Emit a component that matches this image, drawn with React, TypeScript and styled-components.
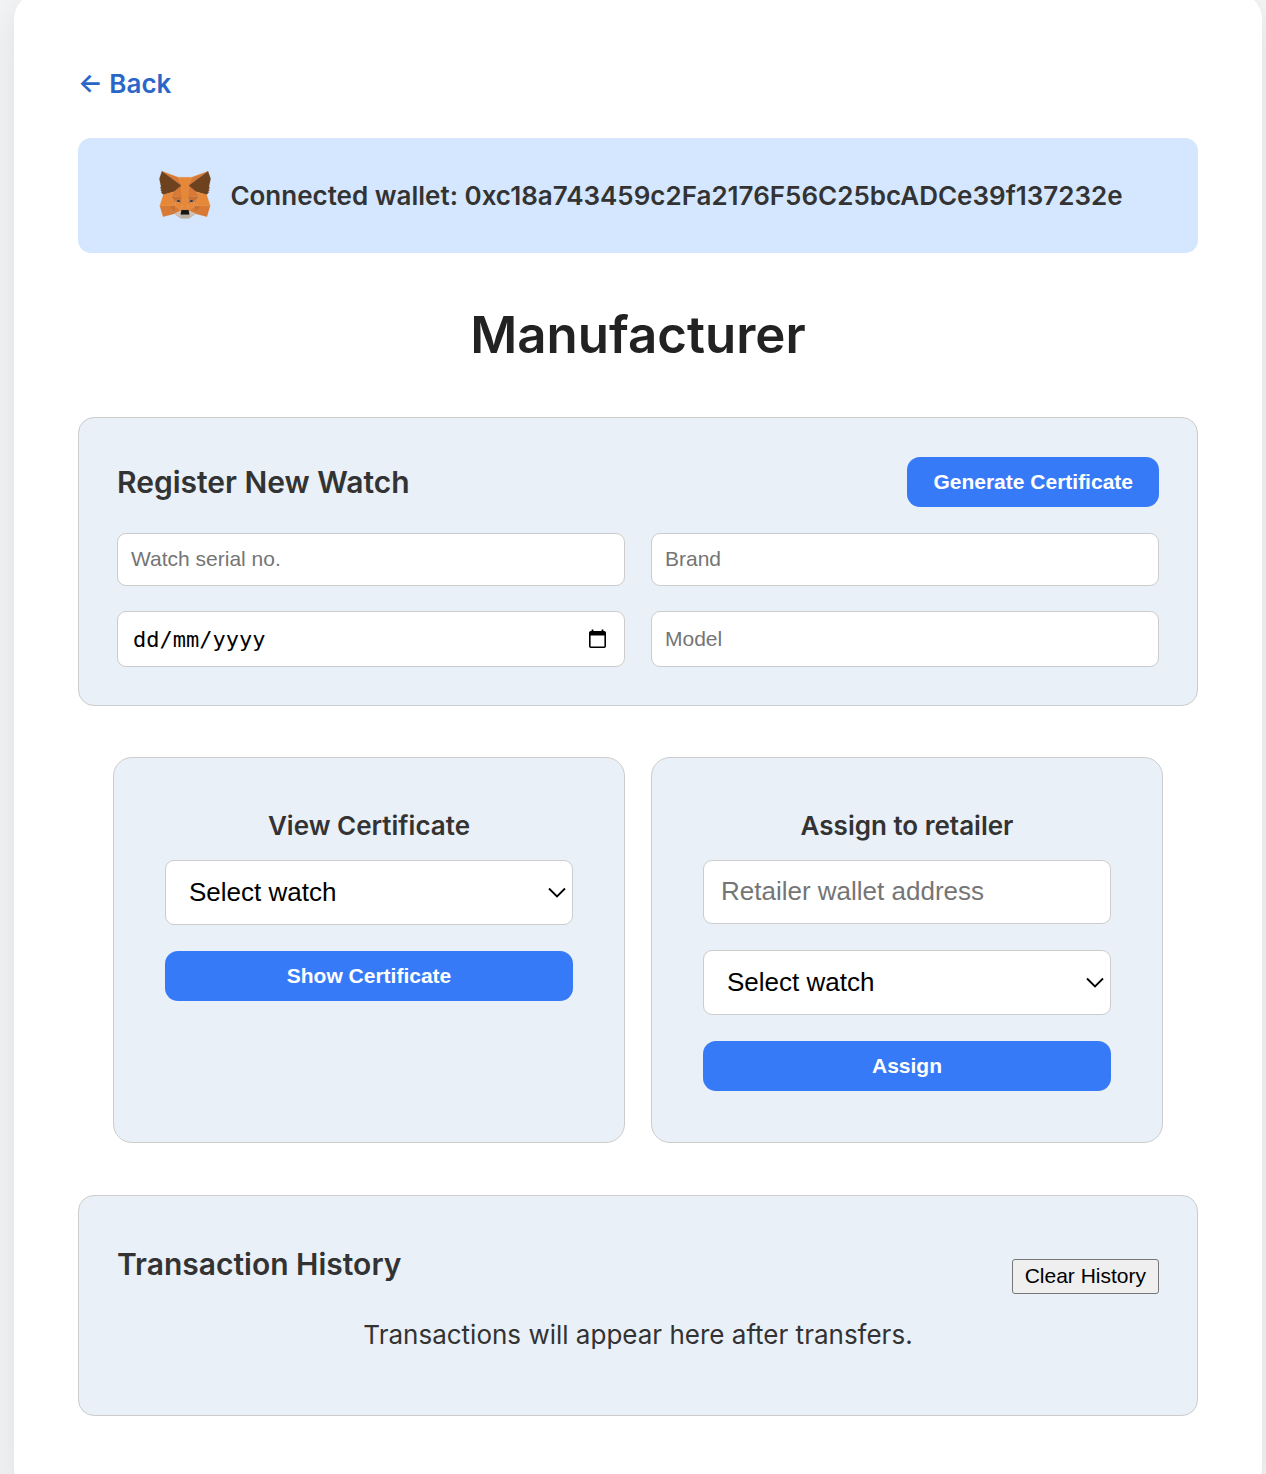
import React from "react";
import styled, { createGlobalStyle } from "styled-components";

const ui = `Inter, "Liberation Sans", sans-serif`;
const control = `"Liberation Sans", Arial, sans-serif`;

const GlobalStyle = createGlobalStyle`
  html { scrollbar-width: none; }
  *, *::before, *::after { box-sizing: border-box; }
  body {
    margin: 0;
    background: #f3f4f6;
    color: #333;
    font-family: ${ui};
    font-size: 26px;
    line-height: 32px;
    -webkit-font-smoothing: antialiased;
  }
`;

const Page = styled.div`
  min-height: 100vh;
  padding: 0 4px 26px 14px;
  overflow: hidden;
`;

const Sheet = styled.main`
  margin-top: -7px;
  padding: 75px 64px 78px;
  border-radius: 26px;
  background: #fff;
  box-shadow: 0 12px 40px rgba(0, 0, 0, 0.09);
`;

const BackLink = styled.a`
  display: block;
  width: fit-content;
  margin-bottom: 38px;
  color: #2a66c8;
  font-weight: 600;
  text-decoration: none;
`;

const Wallet = styled.div`
  display: flex;
  align-items: center;
  justify-content: center;
  gap: 13px;
  min-height: 115px;
  padding: 25px;
  border-radius: 13px;
  background: #d5e7fe;
  font-weight: 600;
`;

const Title = styled.h1`
  margin: 49px 0;
  color: #222;
  font-size: 51px;
  line-height: 66px;
  font-weight: 600;
  text-align: center;
`;

const Card = styled.section`
  padding: 39px 38px 38px;
  border: 1px solid #ccc;
  border-radius: 16px;
  background: #e9f0f7;
`;

const CardHead = styled.div`
  display: flex;
  justify-content: space-between;
  align-items: center;
  margin-bottom: 26px;
`;

const HistoryHead = styled(CardHead)`
  align-items: flex-end;
  margin: 10px 0 24px;
`;

const CardTitle = styled.h2`
  margin: 0;
  font-size: 30px;
  line-height: 38px;
  font-weight: 600;
`;

const HistoryTitle = styled(CardTitle)`
  align-self: flex-start;
  margin-bottom: 11px;
`;

const FieldGrid = styled.div`
  display: grid;
  grid-template-columns: 1fr 1fr;
  gap: 25px 26px;
`;

const Input = styled.input<{ $large?: boolean }>`
  width: 100%;
  min-height: ${(p) => (p.$large ? 64 : 53)}px;
  padding: 0 ${(p) => (p.$large ? 17 : 13)}px 1px;
  border: 1px solid #ccc;
  border-radius: 9px;
  background: #fff;
  color: #000;
  font-family: ${control};
  font-size: ${(p) => (p.$large ? 26 : 21)}px;
  &::placeholder { color: #757575; opacity: 1; }
`;

const DateField = styled.div`
  display: flex;
  align-items: center;
  height: 56px;
  padding: 0 17px 0 15px;
  border: 1px solid #ccc;
  border-radius: 9px;
  background: #fff;
`;

const DateInput = styled.input`
  flex: 1;
  min-width: 0;
  padding: 0;
  border: 0;
  background: transparent;
  font-family: "DejaVu Sans Mono", monospace;
  font-size: 22px;
  &::placeholder { color: #000; opacity: 1; }
`;

const PickerButton = styled.button`
  display: flex;
  padding: 0;
  border: 0;
  background: none;
`;

const Button = styled.button`
  min-height: 50px;
  padding: 0 26px 1px;
  border: 0;
  border-radius: 13px;
  background: #367af8;
  color: #fff;
  font-family: ${control};
  font-size: 21px;
  font-weight: 700;
`;

const Panels = styled.div`
  display: grid;
  grid-template-columns: 1fr 1fr;
  gap: 26px;
  max-width: 1050px;
  margin: 51px auto 52px;
`;

const Panel = styled.section`
  display: flex;
  flex-direction: column;
  gap: 26px;
  padding: 51px;
  border: 1px solid #ccc;
  border-radius: 19px;
  background: #e9f0f7;
`;

const PanelTitle = styled.h3`
  margin: 0 0 -9px;
  font-size: 26px;
  line-height: 34px;
  font-weight: 600;
  text-align: center;
`;

const SelectWrap = styled.div`
  position: relative;
`;

const Select = styled.select`
  display: block;
  width: 100%;
  height: 65px;
  padding: 0 40px 1px 23px;
  border: 1px solid #ccc;
  border-radius: 9px;
  appearance: none;
  background: #fff;
  color: #000;
  font-family: ${control};
  font-size: 26px;
`;

const Chevron = styled.svg`
  position: absolute;
  top: 27px;
  right: 6px;
  pointer-events: none;
`;

const ClearButton = styled.button`
  height: 35px;
  padding: 0 12px 1px;
  border: 1px solid #767676;
  border-radius: 3px;
  background: #efefef;
  color: #000;
  font-family: ${control};
  font-size: 21px;
`;

const EmptyText = styled.p`
  margin: 0 0 25px;
  text-align: center;
  line-height: 34px;
`;

const foxShapes: [string, string][] = [
  ["#d87a35", "274.1,35.5 174.6,109.4 193,65.8"],
  ["#d87a35", "44.4,35.5 143.1,110.1 125.6,65.8"],
  ["#d87a35", "238.3,206.8 211.8,247.4 268.5,263 284.8,207.7"],
  ["#d87a35", "33.9,207.7 50.1,263 106.8,247.4 80.3,206.8"],
  ["#d87a35", "103.6,138.2 87.8,162.1 144.1,164.6 142.1,104.1"],
  ["#d87a35", "214.9,138.2 175.9,103.4 174.6,164.6 230.8,162.1"],
  ["#d87a35", "106.8,247.4 140.6,230.9 111.4,208.1"],
  ["#d87a35", "177.9,230.9 211.8,247.4 207.1,208.1"],
  ["#d4c2b4", "211.8,247.4 177.9,230.9 180.6,253 180.3,262.3"],
  ["#d4c2b4", "106.8,247.4 138.3,262.3 138.1,253 140.6,230.9"],
  ["#2b3545", "138.8,193.5 110.6,185.2 130.5,176.1"],
  ["#2b3545", "179.7,193.5 188,176.1 208,185.2"],
  ["#c9702f", "106.8,247.4 111.6,206.8 80.3,207.7"],
  ["#c9702f", "207,206.8 211.8,247.4 238.3,207.7"],
  ["#c9702f", "230.8,162.1 174.6,164.6 179.8,193.5 188.1,176.1 208.1,185.2"],
  ["#c9702f", "110.6,185.2 130.6,176.1 138.8,193.5 144.1,164.6 87.8,162.1"],
  ["#d97a34", "87.8,162.1 111.4,208.1 110.6,185.2"],
  ["#d97a34", "208.1,185.2 207.1,208.1 230.8,162.1"],
  ["#d97a34", "144.1,164.6 138.8,193.5 145.4,227.6 146.9,182.7"],
  ["#d97a34", "174.6,164.6 171.9,182.6 173.1,227.6 179.8,193.5"],
  ["#e68838", "179.8,193.5 173.1,227.6 177.9,230.9 207.1,208.1 208.1,185.2"],
  ["#e68838", "110.6,185.2 111.4,208.1 140.6,230.9 145.4,227.6 138.8,193.5"],
  ["#bdae9f", "180.3,262.3 180.6,253 178.1,250.8 140.4,250.8 138.1,253 138.3,262.3 106.8,247.4 117.8,256.4 140.1,271.9 178.4,271.9 200.8,256.4 211.8,247.4"],
  ["#161616", "177.9,230.9 173.1,227.6 145.4,227.6 140.6,230.9 138.1,253 140.4,250.8 178.1,250.8 180.6,253"],
  ["#6f421f", "278.3,114.2 286.8,73.4 274.1,35.5 177.9,106.9 214.9,138.2 267.2,153.5 278.8,140 273.8,136.4 281.8,129.1 275.6,124.3 283.6,118.2"],
  ["#6f421f", "31.8,73.4 40.3,114.2 34.9,118.2 42.9,124.3 36.8,129.1 44.8,136.4 39.8,140 51.3,153.5 103.6,138.2 140.6,106.9 44.4,35.5"],
  ["#e68838", "267.2,153.5 214.9,138.2 230.8,162.1 207.1,208.1 238.3,207.7 284.8,207.7"],
  ["#e68838", "103.6,138.2 51.3,153.5 33.9,207.7 80.3,207.7 111.4,208.1 87.8,162.1"],
  ["#e68838", "174.6,164.6 177.9,106.9 193.1,65.8 125.6,65.8 140.6,106.9 144.1,164.6 145.3,182.8 145.4,227.6 173.1,227.6 173.3,182.8"],
];

const FoxLogo = () => (
  <svg width="64" height="64" viewBox="0 0 318.6 318.6" aria-hidden="true">
    {foxShapes.map(([fill, points]) => (
      <polygon key={points} points={points} fill={fill} stroke={fill} strokeLinejoin="round" />
    ))}
  </svg>
);

const CalendarIcon = () => (
  <svg width="19" height="20" viewBox="0 0 19 20" aria-hidden="true">
    <path d="M4.5 0.5v3M14.5 0.5v3" stroke="#000" strokeWidth="1.8" />
    <rect x="1.8" y="2.8" width="15.4" height="15.4" rx="1" fill="none" stroke="#000" strokeWidth="1.6" />
    <path d="M2 3h15v3.5H2z" fill="#000" />
  </svg>
);

const WatchSelect = ({ label }: { label: string }) => (
  <SelectWrap>
    <Select aria-label={label} defaultValue="">
      <option value="">Select watch</option>
    </Select>
    <Chevron width="20" height="12" viewBox="0 0 20 12" aria-hidden="true">
      <path d="M2 1.5l8 8 8-8" fill="none" stroke="#000" strokeWidth="1.8" />
    </Chevron>
  </SelectWrap>
);

export default function App() {
  return (
    <>
      <GlobalStyle />
      <Page>
        <Sheet>
          <BackLink href="#">← Back</BackLink>
          <Wallet>
            <FoxLogo />
            <span>Connected wallet: 0xc18a743459c2Fa2176F56C25bcADCe39f137232e</span>
          </Wallet>
          <Title>Manufacturer</Title>

          <Card>
            <CardHead>
              <CardTitle>Register New Watch</CardTitle>
              <Button type="button">Generate Certificate</Button>
            </CardHead>
            <FieldGrid>
              <Input aria-label="Watch serial no." placeholder="Watch serial no." />
              <Input aria-label="Brand" placeholder="Brand" />
              <DateField>
                <DateInput aria-label="Production date" placeholder="dd/mm/yyyy" />
                <PickerButton type="button" aria-label="Open calendar">
                  <CalendarIcon />
                </PickerButton>
              </DateField>
              <Input aria-label="Model" placeholder="Model" />
            </FieldGrid>
          </Card>

          <Panels>
            <Panel>
              <PanelTitle>View Certificate</PanelTitle>
              <WatchSelect label="Watch to view" />
              <Button type="button">Show Certificate</Button>
            </Panel>
            <Panel>
              <PanelTitle>Assign to retailer</PanelTitle>
              <Input $large aria-label="Retailer wallet address" placeholder="Retailer wallet address" />
              <WatchSelect label="Watch to assign" />
              <Button type="button">Assign</Button>
            </Panel>
          </Panels>

          <Card>
            <HistoryHead>
              <HistoryTitle>Transaction History</HistoryTitle>
              <ClearButton type="button">Clear History</ClearButton>
            </HistoryHead>
            <EmptyText>Transactions will appear here after transfers.</EmptyText>
          </Card>
        </Sheet>
      </Page>
    </>
  );
}
